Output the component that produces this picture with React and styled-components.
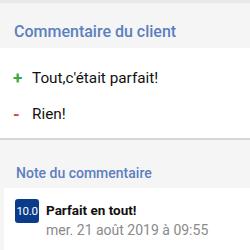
import styled, { createGlobalStyle } from 'styled-components';

const GlobalStyle = createGlobalStyle`
  html, body {
    margin: 0;
    padding: 0;
    background: #f5f5f5;
    font-family: Roboto, "Noto Sans", sans-serif;
  }
`;

const Page = styled.div`
  width: 250px;
  height: 250px;
  overflow: hidden;
  background: #f5f5f5;
  border-top: 3px solid #e8e8e8;
  box-sizing: border-box;
`;

const SectionHeader = styled.div`
  height: 45px;
  box-sizing: border-box;
  display: flex;
  align-items: flex-end;
  padding: 0 14px 7px;
  color: #5b7fc0;
  font-size: 16px;
  line-height: 19px;
  font-weight: 500;
`;

const List = styled.ul`
  list-style: none;
  margin: 0;
  padding: 12px 0 6px;
  background: #fff;
  border-bottom: 2px solid #d6d6d6;
`;

const Item = styled.li`
  display: flex;
  align-items: center;
  height: 36px;
  padding-left: 13px;
  font-size: 15.3px;
  color: #111;
`;

const Sign = styled.span`
  width: 19px;
  font-weight: 700;
  font-size: 17px;
  color: ${p => (p.$positive ? '#3aa845' : '#d9453c')};
`;

const NoteTitle = styled.div`
  height: 48px;
  box-sizing: border-box;
  display: flex;
  align-items: flex-end;
  padding: 0 16px 6px;
  color: #5b7fc0;
  font-size: 14px;
  line-height: 18px;
  font-weight: 500;
`;

const Card = styled.div`
  margin-left: 4px;
  background: #fff;
  padding: 11px 11px 20px;
  display: flex;
  gap: 7px;
`;

const Badge = styled.div`
  width: 24px;
  height: 24px;
  flex-shrink: 0;
  border-radius: 3px;
  background: #0b3c8c;
  color: #fff;
  font-size: 11.5px;
  display: flex;
  align-items: center;
  justify-content: center;
  letter-spacing: -0.3px;
`;

const Body = styled.div`
  display: flex;
  flex-direction: column;
  padding-top: 1px;
`;

const Headline = styled.div`
  font-size: 13.5px;
  font-weight: 700;
  color: #111;
  line-height: 20px;
`;

const Date = styled.div`
  font-size: 14px;
  color: #8a8a8a;
  line-height: 20px;
`;

export default function App() {
  return (
    <>
      <GlobalStyle />
      <Page>
        <SectionHeader>Commentaire du client</SectionHeader>
        <List>
          <Item><Sign $positive>+</Sign>Tout,c'était parfait!</Item>
          <Item><Sign>-</Sign>Rien!</Item>
        </List>
        <NoteTitle>Note du commentaire</NoteTitle>
        <Card>
          <Badge>10.0</Badge>
          <Body>
            <Headline>Parfait en tout!</Headline>
            <Date>mer. 21 août 2019 à 09:55</Date>
          </Body>
        </Card>
      </Page>
    </>
  );
}
